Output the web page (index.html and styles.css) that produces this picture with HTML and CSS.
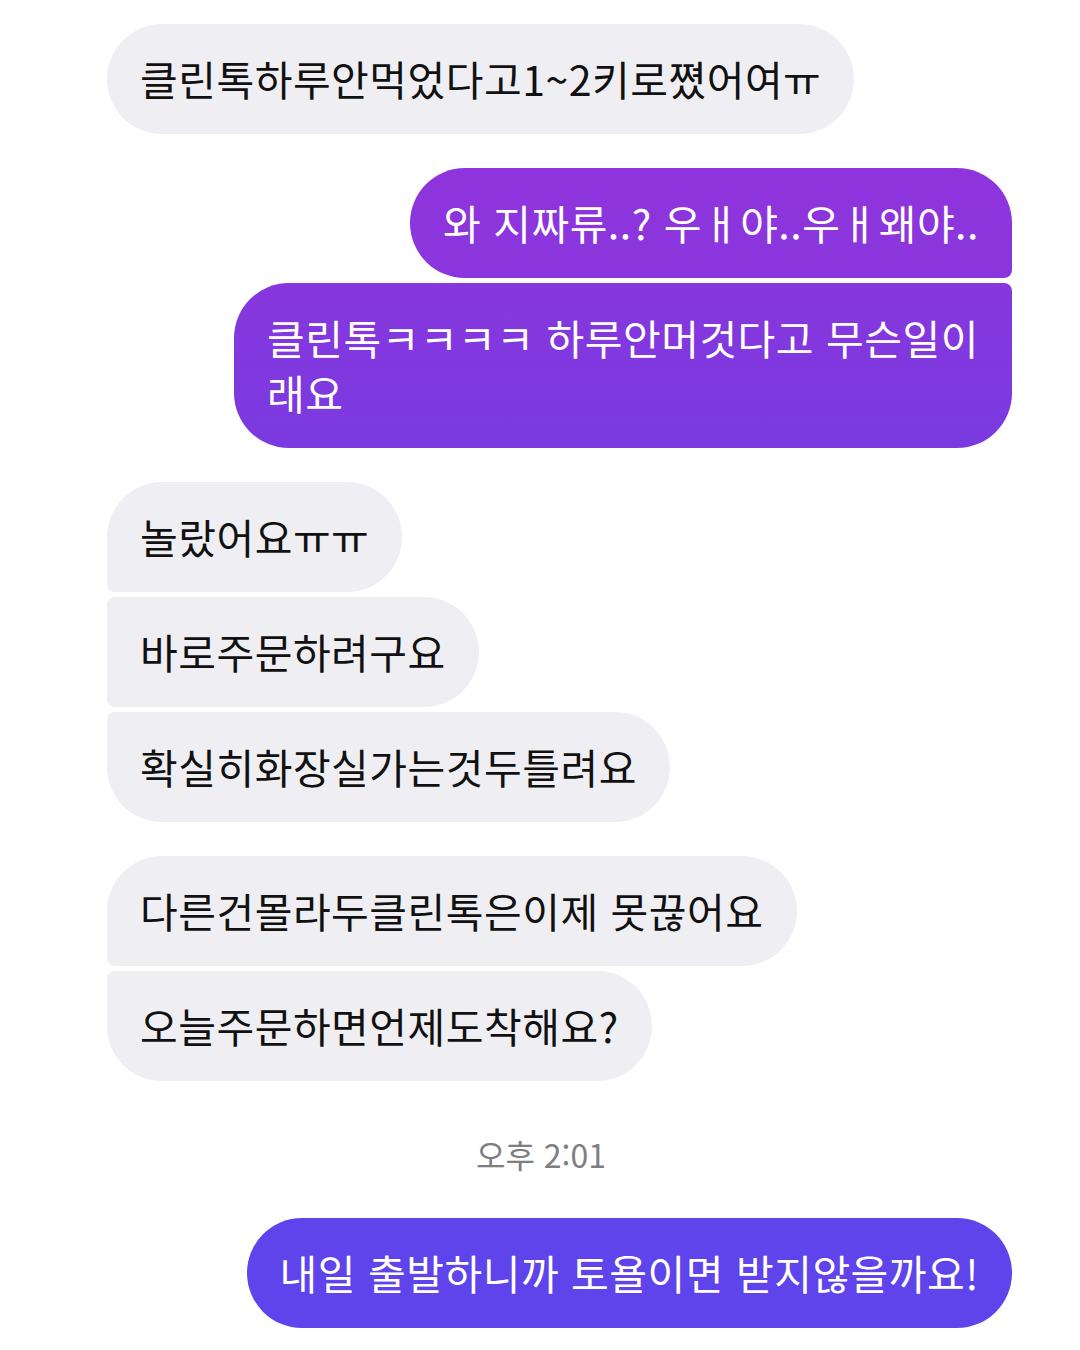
FILE: index.html
```html
<!DOCTYPE html>
<html lang="ko">
<head>
    <meta charset="UTF-8">
    <meta name="viewport" content="width=device-width, initial-scale=1.0">
    <title>메시지</title>
    <link rel="stylesheet" href="styles.css">
</head>
<body>
    <main class="chat">
        <!-- 상대방 메시지 -->
        <div class="group theirs">
            <div class="bubble single">클린톡하루안먹었다고1~2키로쪘어여ㅠ</div>
        </div>

        <!-- 내 메시지 -->
        <div class="group mine">
            <div class="bubble first purple-a">와 지짜류..? 우ㅐ야..우ㅐ왜야..</div>
            <div class="bubble last purple-b">클린톡ㅋㅋㅋㅋ 하루안머것다고 무슨일이 래요</div>
        </div>

        <div class="group theirs">
            <div class="bubble first">놀랐어요ㅠㅠ</div>
            <div class="bubble middle">바로주문하려구요</div>
            <div class="bubble last">확실히화장실가는것두틀려요</div>
        </div>

        <div class="group theirs">
            <div class="bubble first">다른건몰라두클린톡은이제 못끊어요</div>
            <div class="bubble last">오늘주문하면언제도착해요?</div>
        </div>

        <div class="time">오후 2:01</div>

        <div class="group mine">
            <div class="bubble single blue">내일 출발하니까 토욜이면 받지않을까요!</div>
        </div>
    </main>
</body>
</html>
```

FILE: styles.css
```css
/* 기본 스타일 */
body {
    margin: 0;
    padding: 0;
    background-color: #fff;
    font-family: "Noto Sans CJK KR", "Noto Sans", sans-serif;
    color: #111;
}

.chat {
    padding: 24px 68px 0 107px;
    display: flex;
    flex-direction: column;
    gap: 34px;
}

/* 메시지 묶음 */
.group {
    display: flex;
    flex-direction: column;
    gap: 5px;
}

.group.theirs {
    align-items: flex-start;
}

.group.mine {
    align-items: flex-end;
}

/* 말풍선 */
.bubble {
    box-sizing: border-box;
    max-width: 778px;
    padding: 27px 33px 28px;
    font-size: 41px;
    line-height: 55px;
    letter-spacing: 0.5px;
    border-radius: 55px;
    background-color: #efeff3;
}

.theirs .first {
    border-bottom-left-radius: 8px;
}

.theirs .middle {
    border-top-left-radius: 8px;
    border-bottom-left-radius: 8px;
}

.theirs .last {
    border-top-left-radius: 8px;
}

.mine .bubble {
    color: #fff;
}

.mine .first {
    border-bottom-right-radius: 8px;
}

.mine .last {
    border-top-right-radius: 8px;
}

.purple-a {
    background: linear-gradient(#8f34dc, #8a36dd);
}

.purple-b {
    background: linear-gradient(#8637dd, #7a3ae0);
}

.blue {
    background-color: #5f44ec;
}

/* 시간 표시 */
.time {
    text-align: center;
    font-size: 32px;
    line-height: 40px;
    color: #7d7d82;
    margin: 19px 0 10px -37px;
}
```
